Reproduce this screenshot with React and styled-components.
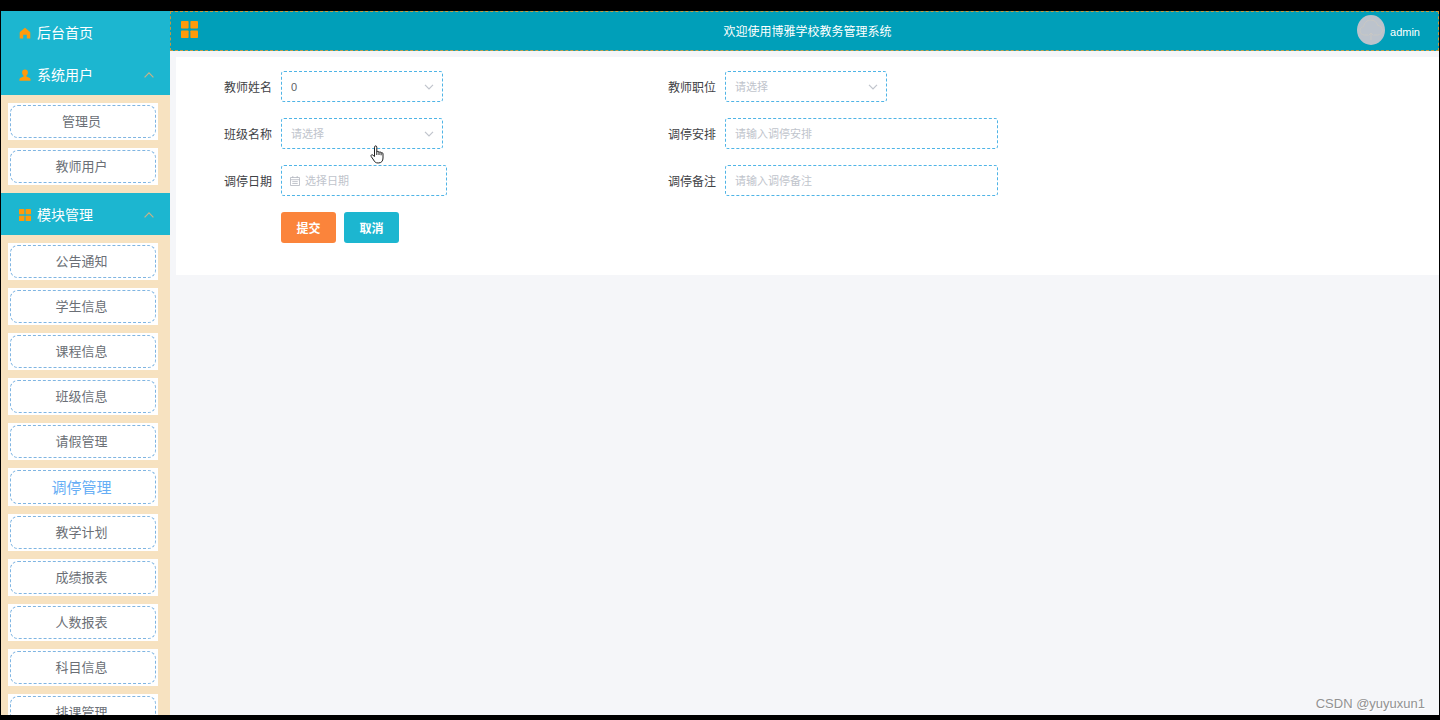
import React from "react";
import { useState } from "react";
import styled, { createGlobalStyle, css } from "styled-components";

const theme = {
  aqua: "#1cb6d0",
  header: "#009fb9",
  sand: "#f7e2c0",
  orange: "#ff9a0a",
  page: "#f5f6f9",
  dash: "#4fb4e6",
};

const GlobalStyle = createGlobalStyle`
  * {
    box-sizing: border-box;
  }
  body {
    margin: 0;
    background-color: #000;
    font-family: "Liberation Sans", "Noto Sans CJK SC", sans-serif;
  }
`;

const HomeIcon = () => (
  <svg width="12" height="12" viewBox="0 0 12 12" aria-hidden="true">
    <path
      d="M6 .8 10.800 4.700C11.100 5 11.300 5.400 11.300 5.800V11.400H7.800V7.700H4.200V11.400H.7V5.800C.7 5.400.9 5 1.200 4.700Z"
      fill={theme.orange}
    />
  </svg>
);

const UserIcon = () => (
  <svg width="12" height="12" viewBox="0 0 12 12" aria-hidden="true">
    <path
      d="M6 .6a2.900 2.900 0 0 1 2.900 3c0 1.300-.6 2.500-1.500 3.200V7.400L10.200 8.700C11.100 9.100 11.600 9.900 11.600 10.800V11.700H.4V10.800C.4 9.900.9 9.100 1.800 8.700L4.600 7.400V6.800C3.700 6.100 3.100 4.900 3.100 3.600a2.900 2.900 0 0 1 2.900-3Z"
      fill={theme.orange}
    />
  </svg>
);

const GridIcon = ({ size }) => (
  <svg width={size} height={size} viewBox="0 0 17 17" aria-hidden="true">
    <g fill={theme.orange}>
      <rect x="0" y="0" width="7.600" height="7.600" rx=".8" />
      <rect x="9.400" y="0" width="7.600" height="7.600" rx=".8" />
      <rect x="0" y="9.400" width="7.600" height="7.600" rx=".8" />
      <rect x="9.400" y="9.400" width="7.600" height="7.600" rx=".8" />
    </g>
  </svg>
);

const CalendarIcon = () => (
  <svg width="10" height="10" viewBox="0 0 10 10" aria-hidden="true">
    <path
      d="M.5 1.500h9v8h-9ZM.5 3.700h9M2.800 0v2M7.200 0v2M2.300 5.600h5.400M2.300 7.500h5.400"
      fill="none"
      stroke="#b4b8c0"
      strokeWidth=".8"
    />
  </svg>
);

const Chevron = ({ up, color }) => (
  <svg width="10" height="6" viewBox="0 0 10 6" aria-hidden="true">
    <path
      d={up ? "M.6 5.300 5 .9 9.400 5.300" : "M1 .8 5 4.800 9 .8"}
      fill="none"
      stroke={color}
      strokeWidth="1.200"
    />
  </svg>
);

const moduleArr = [
  "公告通知",
  "学生信息",
  "课程信息",
  "班级信息",
  "请假管理",
  "调停管理",
  "教学计划",
  "成绩报表",
  "人数报表",
  "科目信息",
  "排课管理",
];

const SelectField = ({ id, label, options }) => (
  <Field>
    <Label htmlFor={id}>{label}</Label>
    <Control $width="162px">
      <Select id={id} $empty={options[0] === "请选择"}>
        {options.map((item) => (
          <option key={item}>{item}</option>
        ))}
      </Select>
      <SelectArrow>
        <Chevron color="#c0c4cc" />
      </SelectArrow>
    </Control>
  </Field>
);

const App = () => {
  const [active, setActive] = useState("调停管理");

  const renderMenu = (items) => (
    <SubMenu>
      {items.map((item) => (
        <MenuItem key={item}>
          <MenuButton
            type="button"
            $active={item === active}
            onClick={() => setActive(item)}
          >
            {item}
          </MenuButton>
        </MenuItem>
      ))}
    </SubMenu>
  );

  return (
    <Screen>
      <GlobalStyle />
      <SideBar>
        <MenuTitle type="button">
          <HomeIcon />
          <span>后台首页</span>
        </MenuTitle>
        <MenuTitle type="button">
          <UserIcon />
          <span>系统用户</span>
          <Chevron up color="#c9b287" />
        </MenuTitle>
        {renderMenu(["管理员", "教师用户"])}
        <MenuTitle type="button">
          <GridIcon size={12} />
          <span>模块管理</span>
          <Chevron up color="#c9b287" />
        </MenuTitle>
        {renderMenu(moduleArr)}
      </SideBar>

      <Main>
        <Header>
          <ToggleButton type="button" aria-label="菜单">
            <GridIcon size={17} />
          </ToggleButton>
          <HeaderTitle>欢迎使用博雅学校教务管理系统</HeaderTitle>
          <Account>
            <Avatar viewBox="0 0 28 30" aria-hidden="true">
              <ellipse cx="14" cy="15" rx="14" ry="15" fill="#bcc3cc" />
              <path
                d="M11 20H7.500C4.500 20 2.800 18 3 15.500c.2-2.200 1.700-3.700 3.700-3.900C7.300 7.500 10 5 13.800 5c3.500 0 6 2 6.900 5.400 2.700.4 4.600 2.300 4.600 4.900 0 2.800-2 4.700-4.800 4.700H17M14 25v-7M11.500 20.500 14 18l2.500 2.500"
                fill="none"
                stroke="#c9c8c4"
                strokeWidth="1"
              />
            </Avatar>
            <span>admin</span>
          </Account>
        </Header>

        <Panel>
          <FormGrid onSubmit={(e) => e.preventDefault()}>
            <SelectField id="teacher" label="教师姓名" options={["0"]} />
            <SelectField id="position" label="教师职位" options={["请选择"]} />
            <SelectField id="class" label="班级名称" options={["请选择"]} />
            <Field>
              <Label htmlFor="plan">调停安排</Label>
              <Control $width="273px">
                <Input id="plan" placeholder="请输入调停安排" />
              </Control>
            </Field>
            <Field>
              <Label htmlFor="date">调停日期</Label>
              <Control $width="166px">
                <Input id="date" placeholder="选择日期" $withIcon />
                <DateIcon>
                  <CalendarIcon />
                </DateIcon>
              </Control>
            </Field>
            <Field>
              <Label htmlFor="remark">调停备注</Label>
              <Control $width="273px">
                <Input id="remark" placeholder="请输入调停备注" />
              </Control>
            </Field>
            <ButtonRow>
              <Button type="submit" $color="#fb843b">
                提交
              </Button>
              <Button type="button" $color={theme.aqua}>
                取消
              </Button>
            </ButtonRow>
          </FormGrid>
        </Panel>
      </Main>

      <Pointer viewBox="0 0 14 19" aria-hidden="true">
        <path
          d="M4.500 11.500V2.200c0-1.800 2.300-1.800 2.300 0V7c.3-1 2.100-.9 2.200.4.4-.9 2-.7 2.100.6.500-.7 1.900-.5 1.900.9V13c0 3-1.500 5-4.800 5-2.700 0-3.600-1.200-4.600-3L1.200 11.500c-.8-1.500.9-2.400 1.900-1.200ZM6.800 7v3M9 7.400V10M11.100 8v2.300"
          fill="#fff"
          stroke="#222"
          strokeWidth="1"
          strokeLinejoin="round"
        />
      </Pointer>
      <Watermark>CSDN @yuyuxun1</Watermark>
    </Screen>
  );
};

const Screen = styled.div`
  position: relative;
  display: flex;
  height: 100vh;
  border: solid #000;
  border-width: 11px 1px 5px;
  background-color: ${theme.page};
  overflow: hidden;
`;

const SideBar = styled.nav`
  flex: 0 0 169px;
  background-color: ${theme.sand};
  overflow: hidden;
`;

const MenuTitle = styled.button`
  display: flex;
  align-items: center;
  gap: 6px;
  width: 100%;
  height: 42px;
  padding: 2px 16px 0 18px;
  border: 0;
  background-color: ${theme.aqua};
  color: #fff;
  font-family: inherit;
  font-size: 14px;
  text-align: left;
  cursor: pointer;
  span {
    flex: 1;
    padding-bottom: 3px;
  }
`;

const SubMenu = styled.ul`
  display: flex;
  flex-direction: column;
  gap: 8px;
  margin: 0;
  padding: 8px 12px 8px 7px;
  list-style: none;
`;

const MenuItem = styled.li`
  padding: 2px;
  background-color: #fff;
`;

const MenuButton = styled.button`
  display: block;
  width: 100%;
  height: 33px;
  padding: 0 3px 2px 0;
  border: 1px dashed #7fb5e2;
  border-radius: 8px;
  background-color: #fff;
  color: #6b6f76;
  font-family: inherit;
  font-size: 13px;
  cursor: pointer;
  ${({ $active }) =>
    $active &&
    css`
      height: 34px;
      color: #66aef5;
      font-size: 15px;
    `}
`;

const Main = styled.main`
  flex: 1;
  min-width: 0;
`;

const Header = styled.header`
  display: grid;
  grid-template-columns: 1fr auto 1fr;
  align-items: center;
  height: 40px;
  padding: 0 18px 0 10px;
  border: 1px dashed #c29b45;
  background-color: ${theme.header};
  color: #fff;
`;

const ToggleButton = styled.button`
  display: flex;
  justify-self: start;
  padding: 0 0 4px;
  border: 0;
  background: none;
  cursor: pointer;
`;

const HeaderTitle = styled.h1`
  margin: 0;
  padding: 0 0 2px 14px;
  font-size: 12px;
  font-weight: normal;
`;

const Account = styled.div`
  display: flex;
  align-items: center;
  justify-self: end;
  gap: 5px;
  font-size: 11px;
  span {
    padding-top: 2px;
  }
`;

const Avatar = styled.svg`
  width: 28px;
  height: 30px;
  margin-bottom: 2px;
`;

const Panel = styled.section`
  margin: 6px 0 0 6px;
  padding: 14px 0 32px;
  background-color: #fff;
`;

const FormGrid = styled.form`
  display: grid;
  grid-template-columns: 444fr 819fr;
  row-gap: 16px;
`;

const Field = styled.div`
  display: flex;
  align-items: center;
`;

const Label = styled.label`
  width: 105px;
  padding: 0 9px 1px 0;
  color: #3f4246;
  font-size: 12px;
  text-align: right;
`;

const Control = styled.div`
  position: relative;
  width: ${({ $width }) => $width};
`;

const controlStyle = css`
  display: block;
  width: 100%;
  height: 31px;
  padding: 0 9px;
  border: 1px dashed ${theme.dash};
  border-radius: 3px;
  background-color: #fff;
  font-family: inherit;
  font-size: 11px;
  outline: none;
`;

const Input = styled.input`
  ${controlStyle}
  padding-left: ${({ $withIcon }) => ($withIcon ? "23px" : "9px")};
  color: #606266;
  &::placeholder {
    color: #c0c4cc;
  }
`;

const Select = styled.select`
  ${controlStyle}
  appearance: none;
  color: ${({ $empty }) => ($empty ? "#c0c4cc" : "#606266")};
`;

const SelectArrow = styled.span`
  position: absolute;
  top: 0;
  bottom: 0;
  right: 9px;
  display: flex;
  align-items: center;
  pointer-events: none;
`;

const DateIcon = styled(SelectArrow)`
  right: auto;
  left: 9px;
`;

const ButtonRow = styled.div`
  display: flex;
  gap: 8px;
  padding-left: 105px;
`;

const Button = styled.button`
  width: 55px;
  height: 31px;
  padding: 0 0 1px;
  border: 0;
  border-radius: 3px;
  background-color: ${({ $color }) => $color};
  color: #fff;
  font-family: inherit;
  font-size: 12px;
  font-weight: bold;
  cursor: pointer;
`;

const Pointer = styled.svg`
  position: absolute;
  top: 134px;
  left: 369px;
  width: 14px;
  height: 19px;
`;

const Watermark = styled.div`
  position: absolute;
  right: 14px;
  bottom: 4px;
  color: #929292;
  font-size: 13px;
  text-shadow: 1px 1px 0 #fff;
`;

export default App;
